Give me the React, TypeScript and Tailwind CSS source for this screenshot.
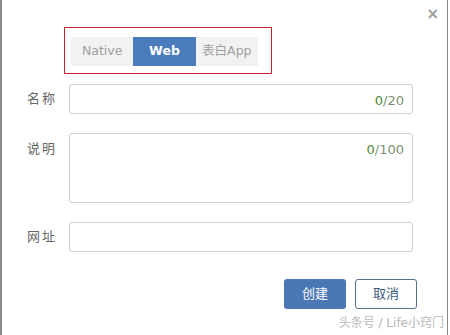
import { useState } from 'react'

const tabs = ['Native', 'Web', '表白App']

function Field({ label, max, tall }: { label: string, max: number, tall?: boolean }) {
    return (
        <div className={`flex ${tall ? 'items-start' : 'items-center'}`}>
            <div className={`w-[67px] pl-[25px] text-[13px] tracking-[2px] text-[#666] ${tall ? 'pt-[6px]' : ''}`}>{label}</div>
            <div className={`relative w-[344px] ${tall ? 'h-[70px]' : 'h-[30px]'} rounded-[3px] border border-[#cfcfcf] bg-white`}>
                {max > 0 && (
                    <span className="absolute right-[8px] top-[6px] text-[13px] text-[#7a8f6e]">
                        <span className="text-[#4f8a35]">0</span>/{max}
                    </span>
                )}
            </div>
        </div>
    )
}

export default function App() {
    const [active, setActive] = useState(1)

    return (
        <div className="relative w-[450px] h-[335px] bg-white overflow-hidden" style={{ fontFamily: '"DejaVu Sans", Verdana, "Noto Sans CJK SC", sans-serif' }}>
            <div className="w-[448px] h-[335px] border-l-2 border-r border-[#8a8a8a] flex flex-col">
                <div className="ml-[62px] mt-[27px] w-[208px] h-[47px] border border-[#c3262e] pl-[6px] pt-[9px]">
                    <div className="flex h-[29px] w-[187px] bg-[#f2f2f2]">
                        {tabs.map((t, i) => (
                            <button
                                key={t}
                                onClick={() => setActive(i)}
                                className={`flex-1 flex items-center justify-center text-[12.5px] ${i === active ? 'bg-[#4a7bbb] text-white font-bold' : 'text-[#a0a0a0]'}`}
                            >
                                {t}
                            </button>
                        ))}
                    </div>
                </div>

                <div className="mt-[10px] flex flex-col gap-[19px]">
                    <Field label="名称" max={20} />
                    <Field label="说明" max={100} tall />
                    <Field label="网址" max={0} />
                </div>

                <div className="mt-[27px] flex justify-end gap-[9px] pr-[30px]">
                    <button className="w-[62px] h-[30px] rounded-[3px] bg-[#4a78b4] text-white text-[13px]">创建</button>
                    <button className="w-[62px] h-[30px] rounded-[3px] border border-[#55708f] text-[#3d5b80] text-[13px]">取消</button>
                </div>
            </div>

            <span className="absolute right-[11px] top-[3px] text-[15px] font-bold text-[#9a9a9a]">×</span>
            <span className="absolute right-[6px] bottom-[3px] text-[12px] text-[#b8b8b8]">头条号 / Life小窍门</span>
        </div>
    )
}
